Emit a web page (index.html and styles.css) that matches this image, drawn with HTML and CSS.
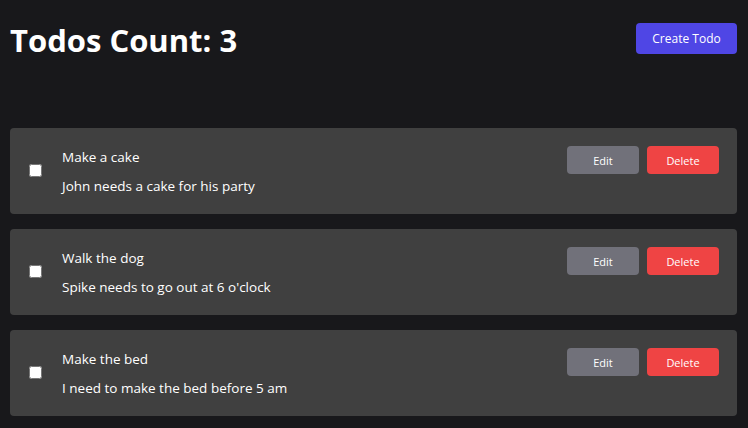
FILE: index.html
```html
<!DOCTYPE html>
<html>
<head>
<meta charset="utf-8">
<link rel="stylesheet" href="styles.css">
</head>
<body>
<div class="page">
  <header class="header">
    <h1 class="title">Todos Count: 3</h1>
    <button class="btn btn-create">Create Todo</button>
  </header>
  <ul class="list">
    <li class="card">
      <input type="checkbox" class="check">
      <div class="text">
        <p class="todo-title">Make a cake</p>
        <p class="todo-desc">John needs a cake for his party</p>
      </div>
      <div class="actions">
        <button class="btn btn-edit">Edit</button>
        <button class="btn btn-delete">Delete</button>
      </div>
    </li>
    <li class="card">
      <input type="checkbox" class="check">
      <div class="text">
        <p class="todo-title">Walk the dog</p>
        <p class="todo-desc">Spike needs to go out at 6 o'clock</p>
      </div>
      <div class="actions">
        <button class="btn btn-edit">Edit</button>
        <button class="btn btn-delete">Delete</button>
      </div>
    </li>
    <li class="card">
      <input type="checkbox" class="check">
      <div class="text">
        <p class="todo-title">Make the bed</p>
        <p class="todo-desc">I need to make the bed before 5 am</p>
      </div>
      <div class="actions">
        <button class="btn btn-edit">Edit</button>
        <button class="btn btn-delete">Delete</button>
      </div>
    </li>
  </ul>
</div>
</body>
</html>
```

FILE: styles.css
```css
* { box-sizing: border-box; }
html, body {
  margin: 0;
  background: #18181b;
  color: #ffffff;
  font-family: "Open Sans", "Noto Sans", sans-serif;
}
.page {
  padding: 0 11px 0 10px;
}
.header {
  display: flex;
  justify-content: space-between;
  align-items: flex-start;
  padding-top: 22px;
  height: 128px;
}
.title {
  margin: 0;
  font-size: 31px;
  font-weight: 700;
  line-height: 36px;
}
.btn {
  border: none;
  border-radius: 4px;
  color: #ffffff;
  font-family: inherit;
  cursor: pointer;
}
.btn-create {
  background: #4f46e5;
  width: 101px;
  height: 31px;
  font-size: 12px;
  margin-top: 1px;
}
.list {
  list-style: none;
  margin: 0;
  padding: 0;
  display: flex;
  flex-direction: column;
  gap: 15px;
}
.card {
  display: flex;
  align-items: flex-start;
  background: #404040;
  border-radius: 4px;
  height: 86px;
  padding: 18px 18px 18px 19px;
}
.check {
  margin: 18px 0 0 0;
  width: 13px;
  height: 13px;
  flex: none;
}
.text {
  flex: 1;
  margin-left: 20px;
  display: flex;
  flex-direction: column;
  gap: 9px;
}
.todo-title, .todo-desc {
  margin: 0;
  font-size: 13.5px;
  line-height: 20px;
}
.todo-title { margin-top: 1px; }
.actions {
  display: flex;
  gap: 8px;
}
.btn-edit, .btn-delete {
  width: 72px;
  height: 28px;
  font-size: 11px;
}
.btn-edit { background: #71717a; }
.btn-delete { background: #ef4444; }
```
